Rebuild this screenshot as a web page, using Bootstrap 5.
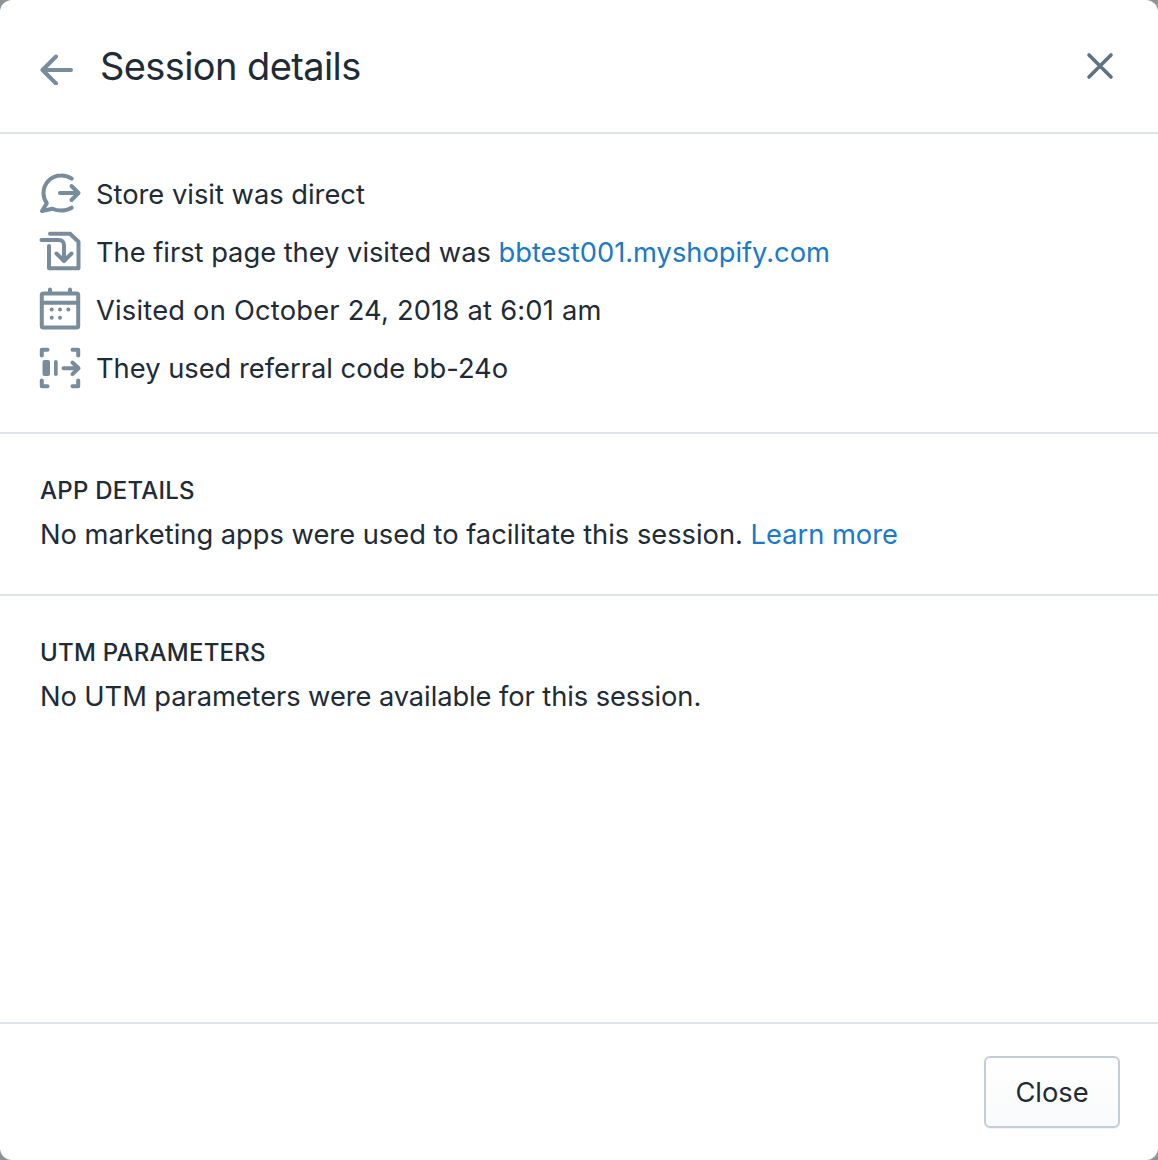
<!DOCTYPE html>
<html lang="en">
<head>
<meta charset="utf-8">
<title>Session details</title>
<link href="https://cdn.jsdelivr.net/npm/bootstrap@5.3.0/dist/css/bootstrap.min.css" rel="stylesheet">
<style>
html,body{height:100%;margin:0}
body{background:#8f9296;font-family:Inter,"Noto Sans",sans-serif;color:#212b36;font-size:27.3px;line-height:40px;overflow:hidden}
.sheet{height:1160px;background:#fff;border-radius:12px;overflow:hidden}
.head{flex:0 0 134px;border-bottom:2px solid #dfe3e8;padding:0 44px 0 40px}
.head h1{font-size:38px;line-height:48px;font-weight:400;margin:0 0 0 22px;color:#212b36;letter-spacing:-.6px}
.facts{flex:0 0 300px;padding:40px 40px 0;gap:18px;border-bottom:2px solid #dfe3e8}
.fact{height:40px;gap:16px}
.fact svg{width:40px;height:40px;flex:none;overflow:visible;fill:none;stroke:#798c9c;stroke-width:4;stroke-linecap:round;stroke-linejoin:round}
.fact span{position:relative;top:1px}
.fact .wide{letter-spacing:.21px}
.fact .near{letter-spacing:-.02px}
.sect{padding:37px 40px 0}
.sect-a{flex:0 0 162px;border-bottom:2px solid #dfe3e8}
.sect-b{flex:1 1 auto}
.sect h2{font-size:24px;line-height:40px;font-weight:500;margin:0 0 4px;color:#212b36;letter-spacing:.24px}
.sect p{margin:0}
.sect-a p{letter-spacing:-.01px}
.sect-b p{letter-spacing:-.08px}
.lnk{color:#1a79c8;text-decoration:none}
.foot{flex:0 0 138px;border-top:2px solid #dfe3e8;padding:32px 38px 0 0}
.closer{width:136px;height:72px;background:linear-gradient(#fff,#f9fafb);border:2px solid #c4cdd5;border-radius:6px;font-size:27.3px;color:#212b36;box-shadow:0 1px 0 rgba(22,29,37,.05);padding:2px 0 0}
.ico{flex:none;fill:none;stroke-linecap:round;stroke-linejoin:round}
</style>
</head>
<body>
<div class="sheet d-flex flex-column">
  <header class="head d-flex align-items-center justify-content-between">
    <div class="d-flex align-items-center">
      <svg class="ico" width="38" height="38" viewBox="0 0 38 38" stroke="#798c9c" stroke-width="4"><path d="M31 23H3M16 9.500 2.500 23 16 36.500"/></svg>
      <h1>Session details</h1>
    </div>
    <svg class="ico" width="28" height="28" viewBox="0 0 28 28" stroke="#5f7382" stroke-width="3.600"><path d="M3 3l22 22M25 3 3 25"/></svg>
  </header>

  <section class="facts d-flex flex-column">
    <div class="fact d-flex align-items-center">
      <svg viewBox="0 0 40 40"><path d="M31.700 4.700A17.500 17.500 0 0 0 21 1.500C11.300 1.500 3.500 9.300 3.500 19c0 3.800 1.200 7.300 3.300 10.200L2 37l10.500-2.300c2.500 1.200 5.400 1.800 8.500 1.800 4 0 7.700-1 10.700-2.800"/><path d="M20 19h18M31.500 12l7 7-7 7"/></svg>
      <span>Store visit was direct</span>
    </div>
    <div class="fact d-flex align-items-center">
      <svg viewBox="0 0 40 40"><path d="M10 1.800h20l8.500 8V36.300H9V14"/><path d="M1.500 8H19c3 0 5 2 5 5v15"/><path d="M16.500 21.500 24 29l7.500-7.500"/></svg>
      <span class="near">The first page they visited was <a class="lnk" href="#">bbtest001.myshopify.com</a></span>
    </div>
    <div class="fact d-flex align-items-center">
      <svg viewBox="0 0 40 40"><rect x="1.800" y="3.500" width="36.400" height="34" rx="1.500"/><path d="M2 12.800h36"/><path d="M10 -.500V3M30 -.500V3"/><g fill="#798c9c" stroke="none"><circle cx="11.700" cy="19.500" r="2"/><circle cx="20" cy="19.500" r="2"/><circle cx="28.300" cy="19.500" r="2"/><circle cx="11.700" cy="27.700" r="2"/><circle cx="20" cy="27.700" r="2"/></g></svg>
      <span class="wide">Visited on October 24, 2018 at 6:01 am</span>
    </div>
    <div class="fact d-flex align-items-center">
      <svg viewBox="0 0 40 40"><path d="M1.800 7.500V1.800H7.500M32.500 1.800h5.700V7.500M1.800 32.500v5.700H7.500M38.200 32.500v5.700h-5.700"/><rect x="2.500" y="12" width="7.500" height="16" rx="2" fill="#798c9c" stroke="none"/><rect x="14" y="12" width="3.700" height="16" rx="1.800" fill="#798c9c" stroke="none"/><path d="M23.500 20.300H38.500M32.500 14.500l6 5.800-6 5.800"/></svg>
      <span>They used referral code bb-24o</span>
    </div>
  </section>

  <section class="sect sect-a">
    <h2>APP DETAILS</h2>
    <p>No marketing apps were used to facilitate this session. <a class="lnk" href="#">Learn more</a></p>
  </section>

  <section class="sect sect-b">
    <h2>UTM PARAMETERS</h2>
    <p>No UTM parameters were available for this session.</p>
  </section>

  <footer class="foot d-flex justify-content-end align-items-start">
    <button type="button" class="btn closer">Close</button>
  </footer>
</div>
</body>
</html>
